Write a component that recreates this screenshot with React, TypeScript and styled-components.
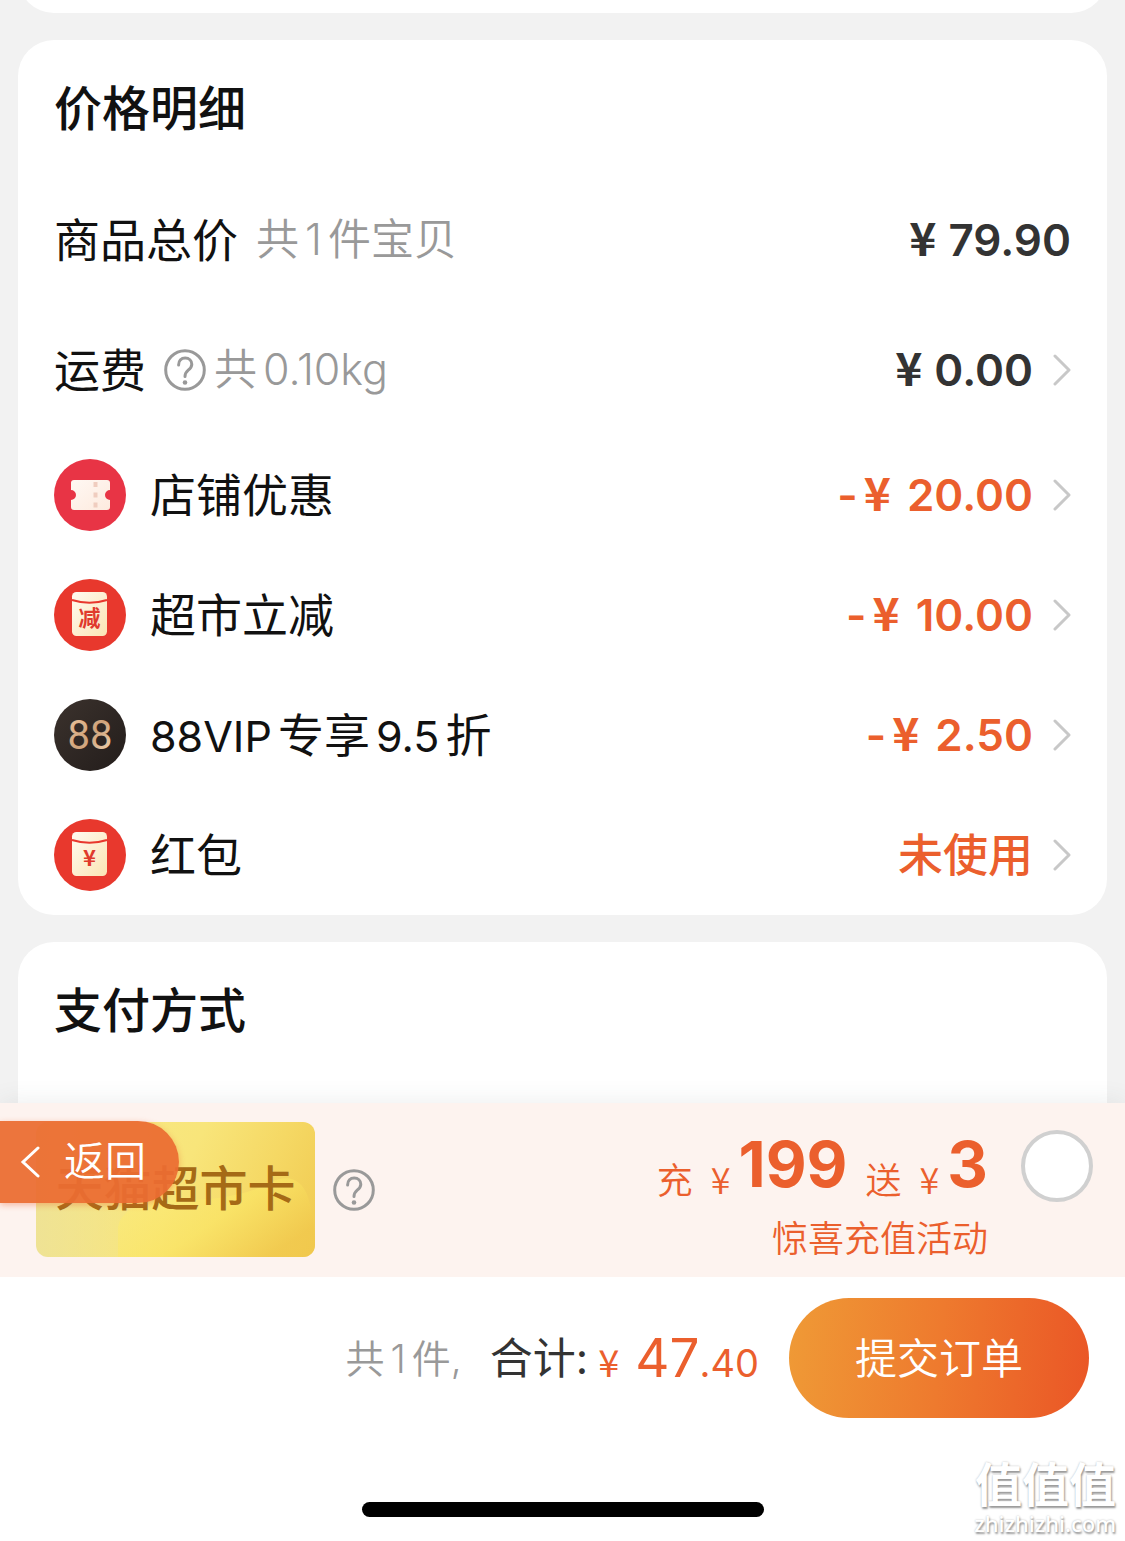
import React from "react";
import styled, { createGlobalStyle } from "styled-components";

const latinFirst = `Inter, "Noto Sans CJK SC", sans-serif`;
const hanFirst = `"Noto Sans CJK SC", sans-serif`;

const color = {
  page: "#f2f2f2",
  ink: "#111111",
  price: "#333333",
  muted: "#999999",
  accent: "#eb5f2d",
  strip: "#fdf3ef",
};

const GlobalStyle = createGlobalStyle`
  *, *::before, *::after { box-sizing: border-box; }
  body {
    margin: 0;
    background: ${color.page};
    color: ${color.ink};
    font-family: ${latinFirst};
    -webkit-font-smoothing: antialiased;
  }
  button { font: inherit; border: 0; padding: 0; background: none; cursor: pointer; }
  h2 { margin: 0; }
`;

const Screen = styled.div`
  position: relative;
  display: flex;
  flex-direction: column;
  height: 100vh;
  overflow: hidden;
`;

const Scroller = styled.main`
  flex: 1;
  min-height: 0;
  overflow: hidden;
  display: flex;
  flex-direction: column;
  gap: 27px;
  padding: 0 18px;
`;

const Card = styled.section`
  flex: none;
  padding: 0 36px;
  border-radius: 36px;
  background: #fff;
`;

const ScrolledCard = styled(Card)`
  height: 80px;
  margin-top: -67px;
`;

const PaymentCard = styled(Card)`
  min-height: 240px;
`;

const CardTitle = styled.h2`
  display: flex;
  align-items: center;
  height: 135px;
  padding-bottom: 6px;
  font-size: 48px;
  font-weight: 500;
`;

const Row = styled.div<{ $tall?: boolean }>`
  display: flex;
  align-items: center;
  height: ${(p) => (p.$tall ? 130 : 120)}px;
  font-size: 46px;
`;

const Label = styled.span`
  padding-bottom: 6px;
  white-space: nowrap;
`;

const Note = styled.span<{ $gap: number }>`
  margin-left: ${(p) => p.$gap}px;
  padding-bottom: 8px;
  color: ${color.muted};
  font-size: 43px;
  font-weight: 350;
  white-space: nowrap;
`;

const Latin = styled.span<{ $size?: number }>`
  margin: 0 6px;
  font-size: ${(p) => (p.$size ? `${p.$size}px` : "inherit")};
`;

const LeadingLatin = styled(Latin)`
  margin-left: 0;
`;

const Badge = styled.svg`
  flex: none;
  width: 72px;
  height: 72px;
  margin-right: 24px;
`;

const Value = styled.span<{ $accent?: boolean }>`
  display: flex;
  align-items: baseline;
  margin-left: auto;
  color: ${(p) => (p.$accent ? color.accent : color.price)};
  font-size: 44px;
  font-weight: 600;
  white-space: nowrap;
`;

const Yen = styled.span<{ $gap?: number; $size?: number }>`
  margin-right: ${(p) => p.$gap ?? 12}px;
  font-family: ${hanFirst};
  font-size: ${(p) => p.$size ?? 46}px;
  font-weight: inherit;
  line-height: 1;
`;

const Minus = styled.span`
  margin-right: 6px;
`;

const Unused = styled.span`
  padding-bottom: 6px;
  font-size: 45px;
  font-weight: 500;
`;

const MoreButton = styled.button`
  display: flex;
  margin-left: 20px;
`;

const HelpButton = styled.button<{ $gap: number }>`
  display: flex;
  flex: none;
  margin-left: ${(p) => p.$gap}px;
  color: ${color.muted};
`;

const Footer = styled.footer`
  position: relative;
  background: #fff;
  box-shadow: 0 0 24px rgba(60, 80, 75, 0.1);
`;

const PromoStrip = styled.div`
  display: flex;
  align-items: flex-start;
  height: 174px;
  padding: 19px 32px 0 36px;
  background: ${color.strip};
`;

const GiftGroup = styled.div`
  display: flex;
  align-items: center;
`;

const GiftCard = styled.div`
  position: relative;
  display: flex;
  align-items: center;
  justify-content: center;
  width: 279px;
  height: 135px;
  border-radius: 12px;
  overflow: hidden;
  color: #a56a16;
  font-size: 48px;
  font-weight: 500;
  white-space: nowrap;
  background:
    linear-gradient(90deg, rgba(238, 226, 150, 0.9), rgba(248, 232, 130, 0) 42%),
    linear-gradient(115deg, #f7e98a 0%, #f8e57a 50%, #f5d864 75%, #f0c94f 100%);
`;

const CardArt = styled.svg`
  position: absolute;
  inset: 0;
  width: 100%;
  height: 100%;
`;

const CardName = styled.span`
  position: relative;
  padding-bottom: 10px;
`;

const Offer = styled.label`
  display: flex;
  align-items: flex-start;
  gap: 33px;
  margin-left: auto;
  color: ${color.accent};
  font-size: 36px;
  font-weight: 350;
  white-space: nowrap;
`;

const OfferText = styled.span`
  display: flex;
  flex-direction: column;
  align-items: flex-end;
`;

const OfferLine = styled.span`
  display: flex;
  align-items: flex-end;
  height: 84px;
`;

const OfferWord = styled.span<{ $gap?: number }>`
  display: flex;
  align-items: baseline;
  gap: 18px;
  margin-left: ${(p) => p.$gap ?? 0}px;
  line-height: 50px;
`;

const OfferAmount = styled.strong`
  font-size: 63px;
  font-weight: 700;
  line-height: 84px;
`;

const OfferCaption = styled.span`
  line-height: 66px;
`;

const OfferRadio = styled.input`
  appearance: none;
  width: 72px;
  height: 72px;
  margin: 8px 0 0;
  border: 4px solid #d0d0d0;
  border-radius: 50%;
  background: #fff;
  &:checked { background: ${color.accent}; }
`;

const Checkout = styled.div`
  display: flex;
  align-items: center;
  justify-content: flex-end;
  height: 162px;
  padding: 0 36px;
  white-space: nowrap;
`;

const Summary = styled.div`
  display: flex;
  align-items: center;
  margin-right: 30px;
`;

const Count = styled.span`
  padding-bottom: 4px;
  color: ${color.muted};
  font-size: 39px;
  font-weight: 350;
`;

const TotalLabel = styled.span`
  margin: 0 10px 0 28px;
  padding-bottom: 6px;
  color: ${color.price};
  font-size: 43px;
`;

const Amount = styled.span`
  display: flex;
  align-items: baseline;
  color: ${color.accent};
  font-size: 38px;
`;

const AmountWhole = styled.span`
  font-size: 53px;
`;

const SubmitButton = styled.button`
  width: 300px;
  height: 120px;
  border-radius: 60px;
  && {
    padding-bottom: 6px;
    background: linear-gradient(95deg, #ef9a36 0%, #ee7a2e 50%, #ea5626 100%);
    color: #fff;
    font-size: 42px;
    font-weight: 350;
  }
`;

const HomeArea = styled.div`
  display: flex;
  justify-content: center;
  padding: 63px 0 24px;
`;

const HomeIndicator = styled.div`
  width: 402px;
  height: 15px;
  border-radius: 8px;
  background: #000;
`;

const BackButton = styled.button`
  && {
    position: absolute;
    left: 0;
    top: 18px;
    display: flex;
    align-items: center;
    gap: 24px;
    width: 179px;
    height: 82px;
    padding-left: 20px;
    border-radius: 0 41px 41px 0;
    background: rgba(235, 108, 50, 0.94);
    box-shadow: 0 2px 6px rgba(235, 95, 45, 0.4);
    color: #fff;
    font-size: 41px;
    font-weight: 350;
  }
`;

const BackText = styled.span`
  padding-bottom: 8px;
`;

const Watermark = styled.div`
  position: absolute;
  right: 9px;
  bottom: 3px;
  display: flex;
  flex-direction: column;
  align-items: flex-end;
  color: #fff;
  text-shadow: 1px 2px 2px #999, 0 0 2px #bbb;
`;

const WatermarkName = styled.span`
  font-size: 47px;
  font-weight: 700;
  line-height: 47px;
`;

const WatermarkUrl = styled.span`
  font-family: "Noto Sans", sans-serif;
  font-size: 22px;
  font-weight: 500;
  line-height: 30px;
`;

function Chevron() {
  return (
    <svg width="18" height="32" viewBox="0 0 18 32" fill="none" stroke="#c8c8c8" strokeWidth="3" strokeLinecap="round" strokeLinejoin="round" aria-hidden="true">
      <path d="M2 2 16 16 2 30" />
    </svg>
  );
}

function HelpIcon() {
  return (
    <svg width="42" height="42" viewBox="0 0 42 42" fill="none" stroke="currentColor" strokeWidth="3" strokeLinecap="round" aria-hidden="true">
      <circle cx="21" cy="21" r="19.3" />
      <path d="M14.6 16c0-4.400 2.800-7 6.600-7s6.600 2.600 6.600 6.200c0 3-1.800 4.500-3.600 6-2 1.700-3.200 3-3.200 6.300" />
      <circle cx="21" cy="33.500" r="2.300" fill="currentColor" stroke="none" />
    </svg>
  );
}

function CouponBadge() {
  return (
    <Badge viewBox="0 0 72 72" aria-hidden="true">
      <defs>
        <linearGradient id="ticket" x1="0" y1="0" x2="1" y2="1">
          <stop offset="0" stopColor="#fff8f3" />
          <stop offset="1" stopColor="#fdeade" />
        </linearGradient>
      </defs>
      <circle cx="36" cy="36" r="36" fill="#e83445" />
      <path d="M20 21h33a3 3 0 0 1 3 3v7a5 5 0 0 0 0 10v7a3 3 0 0 1-3 3H20a3 3 0 0 1-3-3v-7a5 5 0 0 0 0-10v-7a3 3 0 0 1 3-3z" fill="url(#ticket)" />
      <path d="M41.500 23v5M41.500 33.500v5M41.500 43.500v5" stroke="#f0cdbf" strokeWidth="4" />
    </Badge>
  );
}

function EnvelopeBadge({ mark, size, id }: { mark: string; size: number; id: string }) {
  return (
    <Badge viewBox="0 0 72 72" aria-hidden="true">
      <defs>
        <linearGradient id={id} x1="0" y1="0" x2="1" y2="1">
          <stop offset="0" stopColor="#fffaf0" />
          <stop offset="1" stopColor="#fbe5b4" />
        </linearGradient>
      </defs>
      <circle cx="36" cy="36" r="36" fill="#e8382d" />
      <rect x="18" y="13" width="35" height="44" rx="4.500" fill={`url(#${id})`} />
      <path d="M18 21q17.500 5.500 35 0" fill="none" stroke="#e8382d" strokeWidth="2" />
      <text x="35.500" y="47" textAnchor="middle" fontSize={size} fontWeight="700" fontFamily="Noto Sans CJK SC" fill="#e03a2c">
        {mark}
      </text>
    </Badge>
  );
}

function VipBadge() {
  return (
    <Badge viewBox="0 0 72 72" aria-hidden="true">
      <defs>
        <linearGradient id="vip" x1="0" y1="0" x2="1" y2="1">
          <stop offset="0" stopColor="#3b322d" />
          <stop offset="1" stopColor="#231d1b" />
        </linearGradient>
        <linearGradient id="gold" x1="0" y1="0" x2="1" y2="1">
          <stop offset="0" stopColor="#efc79f" />
          <stop offset="0.5" stopColor="#cfa37b" />
          <stop offset="1" stopColor="#f6dcbb" />
        </linearGradient>
      </defs>
      <circle cx="36" cy="36" r="36" fill="url(#vip)" />
      <text x="36" y="50" textAnchor="middle" fontSize="40" fontFamily="Roboto" fill="url(#gold)">
        88
      </text>
    </Badge>
  );
}

const discounts = [
  { id: "shop", name: "店铺优惠", amount: "20.00", badge: <CouponBadge /> },
  { id: "market", name: "超市立减", amount: "10.00", badge: <EnvelopeBadge mark="减" size={22} id="envelope-cut" /> },
  {
    id: "vip",
    name: (
      <>
        <LeadingLatin $size={43}>88VIP</LeadingLatin>专享<Latin $size={43}>9.5</Latin>折
      </>
    ),
    amount: "2.50",
    badge: <VipBadge />,
  },
  { id: "red-packet", name: "红包", amount: null, badge: <EnvelopeBadge mark="¥" size={22} id="envelope-red" /> },
];

export default function App() {
  return (
    <Screen>
      <GlobalStyle />
      <Scroller>
        <ScrolledCard />
        <Card>
          <CardTitle>价格明细</CardTitle>
          <Row $tall>
            <Label>商品总价</Label>
            <Note $gap={18}>共<Latin>1</Latin>件宝贝</Note>
            <Value>
              <Yen>¥</Yen>79.90
            </Value>
          </Row>
          <Row $tall>
            <Label>运费</Label>
            <HelpButton $gap={18} aria-label="运费说明"><HelpIcon /></HelpButton>
            <Note $gap={8}>共<Latin>0.10kg</Latin></Note>
            <Value>
              <Yen>¥</Yen>0.00
            </Value>
            <MoreButton aria-label="运费"><Chevron /></MoreButton>
          </Row>
          {discounts.map((d) => (
            <Row key={d.id}>
              {d.badge}
              <Label>{d.name}</Label>
              <Value $accent>
                {d.amount ? (
                  <>
                    <Minus>-</Minus>
                    <Yen $gap={16}>¥</Yen>
                    {d.amount}
                  </>
                ) : (
                  <Unused>未使用</Unused>
                )}
              </Value>
              <MoreButton aria-label="查看"><Chevron /></MoreButton>
            </Row>
          ))}
        </Card>
        <PaymentCard>
          <CardTitle>支付方式</CardTitle>
        </PaymentCard>
      </Scroller>

      <Footer>
        <PromoStrip>
          <GiftGroup>
            <GiftCard>
              <CardArt viewBox="0 0 279 135" preserveAspectRatio="none" aria-hidden="true">
                <defs>
                  <linearGradient id="wave" x1="0" y1="0" x2="1" y2="0.600">
                    <stop offset="0" stopColor="#fbec80" />
                    <stop offset="0.6" stopColor="#fae565" />
                    <stop offset="1" stopColor="#f1c84c" />
                  </linearGradient>
                </defs>
                <path d="M82 135V105Q86 82 130 78Q200 80 235 60Q262 48 272 75Q280 100 279 135Z" fill="url(#wave)" opacity="0.700" />
              </CardArt>
              <CardName>天猫超市卡</CardName>
            </GiftCard>
            <HelpButton $gap={18} aria-label="超市卡说明"><HelpIcon /></HelpButton>
          </GiftGroup>
          <Offer>
            <OfferText>
              <OfferLine>
                <OfferWord>充<Yen $size={36} $gap={8}>¥</Yen></OfferWord>
                <OfferAmount>199</OfferAmount>
                <OfferWord $gap={18}>送<Yen $size={36} $gap={8}>¥</Yen></OfferWord>
                <OfferAmount>3</OfferAmount>
              </OfferLine>
              <OfferCaption>惊喜充值活动</OfferCaption>
            </OfferText>
            <OfferRadio type="radio" name="recharge" />
          </Offer>
        </PromoStrip>
        <Checkout>
          <Summary>
            <Count>共<Latin>1</Latin>件,</Count>
            <TotalLabel>合计:</TotalLabel>
            <Amount>
              <Yen $size={38} $gap={16}>¥</Yen>
              <AmountWhole>47</AmountWhole>.40
            </Amount>
          </Summary>
          <SubmitButton>提交订单</SubmitButton>
        </Checkout>
        <HomeArea><HomeIndicator /></HomeArea>
        <BackButton>
          <svg width="20" height="32" viewBox="0 0 20 32" fill="none" stroke="#fff" strokeWidth="3" strokeLinecap="round" aria-hidden="true">
            <path d="M18 2 3 16 18 30" />
          </svg>
          <BackText>返回</BackText>
        </BackButton>
        <Watermark>
          <WatermarkName>值值值</WatermarkName>
          <WatermarkUrl>zhizhizhi.com</WatermarkUrl>
        </Watermark>
      </Footer>
    </Screen>
  );
}
